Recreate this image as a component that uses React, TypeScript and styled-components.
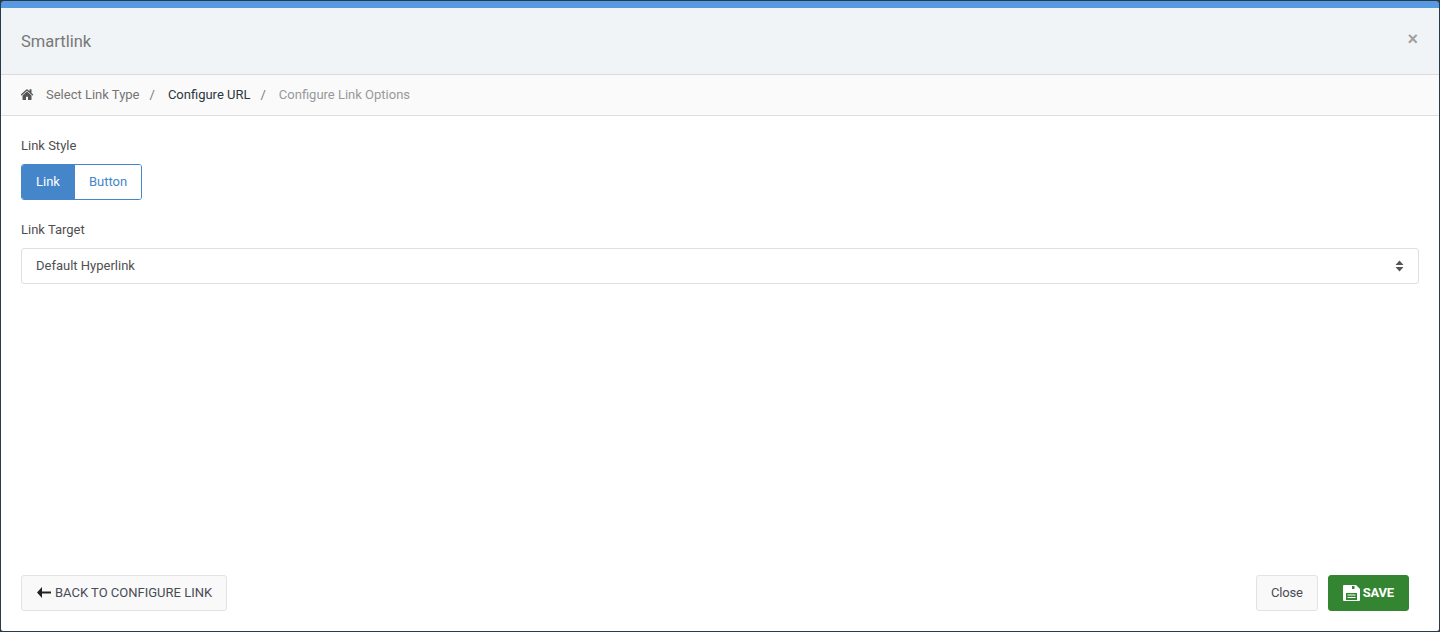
import React from "react";
import styled, { createGlobalStyle } from "styled-components";

const GlobalStyle = createGlobalStyle`
  html, body {
    margin: 0;
    height: 100%;
    background: #2b3a4a;
  }
  #root {
    height: 100%;
  }
`;

const Modal = styled.div`
  box-sizing: border-box;
  height: 632px;
  margin: 0 1px;
  padding-bottom: 1px;
  display: flex;
  flex-direction: column;
  font-family: Roboto, "Liberation Sans", sans-serif;
  font-size: 13px;
  color: #4a4a4a;
`;

const Panel = styled.div`
  flex: 1;
  display: flex;
  flex-direction: column;
  margin-top: 1px;
  background: #fff;
  border-top: 7px solid #589ae2;
  border-radius: 3px 3px 2px 2px;
`;

const Header = styled.div`
  height: 66px;
  padding: 0 20px;
  display: flex;
  align-items: center;
  justify-content: space-between;
  background: #f0f4f7;
  border-bottom: 1px solid #d9dbdc;
`;

const Title = styled.h4`
  margin: 0;
  font-size: 16.5px;
  font-weight: 400;
  color: #787878;
`;

const CloseX = styled.span`
  font-family: "Liberation Sans", sans-serif;
  font-size: 18px;
  font-weight: 700;
  line-height: 1;
  color: #a0a0a0;
  margin: 0 1px 5px 0;
`;

const Breadcrumb = styled.div`
  box-sizing: content-box;
  height: 38px;
  padding: 0 20px 2px;
  display: flex;
  align-items: center;
  background: #fafafa;
  border-bottom: 1px solid #dedede;
`;

const Crumb = styled.span<{ $tone: "done" | "current" | "todo" }>`
  color: ${(p) =>
    p.$tone === "current" ? "#2c3640" : p.$tone === "todo" ? "#98999b" : "#757575"};
`;

const Divider = styled.span`
  margin: 0 13px 0 10px;
  color: #7a7a7a;
`;

const HomeGlyph = styled.svg`
  width: 13px;
  height: 11px;
  margin: 1px 12px 0 0;
  fill: #555;
`;

const Body = styled.div`
  flex: 1;
  padding: 22px 20px 0;
`;

const Label = styled.div`
  line-height: 16px;
  color: #4f4f4f;
`;

const Toggle = styled.div`
  display: inline-flex;
  height: 36px;
  box-sizing: border-box;
  margin: 10px 0 22px;
  border: 1px solid #4586cb;
  border-radius: 3px;
  overflow: hidden;
  vertical-align: top;
`;

const ToggleOption = styled.div<{ $active?: boolean }>`
  display: flex;
  align-items: center;
  padding: 0 ${(p) => (p.$active ? 15 : 14)}px 1px 14px;
  background: ${(p) => (p.$active ? "#4586cb" : "#fff")};
  color: ${(p) => (p.$active ? "#fff" : "#4586cb")};
`;

const Select = styled.div`
  box-sizing: border-box;
  height: 36px;
  margin-top: 10px;
  padding: 0 14px 1px 14px;
  display: flex;
  align-items: center;
  justify-content: space-between;
  border: 1px solid #dfdfdf;
  border-radius: 3px;
  color: #505050;
`;

const Footer = styled.div`
  padding: 0 30px 20px 20px;
  display: flex;
  align-items: center;
  justify-content: space-between;
`;

const FooterRight = styled.div`
  display: flex;
  gap: 10px;
`;

const Button = styled.div<{ $primary?: boolean }>`
  box-sizing: border-box;
  height: 36px;
  padding: 0 14px 1px;
  display: flex;
  align-items: center;
  border: 1px solid ${(p) => (p.$primary ? "#348532" : "#e3e3e3")};
  border-radius: 3px;
  background: ${(p) => (p.$primary ? "#348532" : "#f9f9f9")};
  color: ${(p) => (p.$primary ? "#fff" : "#484c55")};
  font-weight: ${(p) => (p.$primary ? 700 : 400)};
  letter-spacing: -0.2px;
`;

const BackButton = styled(Button)`
  padding: 0 14px 1px 15px;
  letter-spacing: 0;
`;

const BackGlyph = styled.svg`
  width: 14px;
  height: 11px;
  margin-right: 4px;
  fill: #222;
`;

const SaveGlyph = styled.svg`
  width: 17px;
  height: 16px;
  margin-right: 3px;
  fill: #fff;
`;

const SortGlyph = styled.svg`
  width: 9px;
  height: 12px;
  fill: #555;
`;

export default function App() {
  return (
    <>
      <GlobalStyle />
      <Modal>
        <Panel>
          <Header>
            <Title>Smartlink</Title>
            <CloseX>×</CloseX>
          </Header>
          <Breadcrumb>
            <HomeGlyph viewBox="64 220 1664 1320" preserveAspectRatio="none">
              <path d="M1408 992v480q0 26-19 45t-45 19h-384v-384h-256v384h-384q-26 0-45-19t-19-45v-480q0-1 .5-3t.5-3l575-474 575 474q1 2 1 6zm223-69l-62 74q-8 9-21 11h-3q-13 0-21-7l-692-577-692 577q-12 8-24 7-13-2-21-11l-62-74q-8-10-7-23.5t11-21.5l719-599q32-26 76-26t76 26l244 204v-195q0-14 9-23t23-9h192q14 0 23 9t9 23v408l219 182q10 8 11 21.5t-7 23.5z" />
            </HomeGlyph>
            <Crumb $tone="done">Select Link Type</Crumb>
            <Divider>/</Divider>
            <Crumb $tone="current">Configure URL</Crumb>
            <Divider>/</Divider>
            <Crumb $tone="todo">Configure Link Options</Crumb>
          </Breadcrumb>
          <Body>
            <Label>Link Style</Label>
            <Toggle>
              <ToggleOption $active>Link</ToggleOption>
              <ToggleOption>Button</ToggleOption>
            </Toggle>
            <Label>Link Target</Label>
            <Select>
              Default Hyperlink
              <SortGlyph viewBox="0 0 9 12">
                <path d="M4.5 0.5 L8.5 5 H0.5 Z M0.5 7 H8.5 L4.5 11.5 Z" />
              </SortGlyph>
            </Select>
          </Body>
          <Footer>
            <BackButton>
              <BackGlyph viewBox="0 0 14 11">
                <path d="M5 0 L0 5.5 L5 11 V6.5 H14 V4.5 H5 Z" />
              </BackGlyph>
              BACK TO CONFIGURE LINK
            </BackButton>
            <FooterRight>
              <Button>Close</Button>
              <Button $primary>
                <SaveGlyph viewBox="0 0 17 16">
                  <path
                    fillRule="evenodd"
                    d="M1 0 H13 L17 4 V15 A1 1 0 0 1 16 16 H1 A1 1 0 0 1 0 15 V1 A1 1 0 0 1 1 0 Z M9 1 H11.5 V4 H9 Z M3 8 H14 V15 H3 Z M4.5 9.5 H12.5 V10.5 H4.5 Z M4.5 12 H12.5 V13 H4.5 Z"
                  />
                </SaveGlyph>
                SAVE
              </Button>
            </FooterRight>
          </Footer>
        </Panel>
      </Modal>
    </>
  );
}
